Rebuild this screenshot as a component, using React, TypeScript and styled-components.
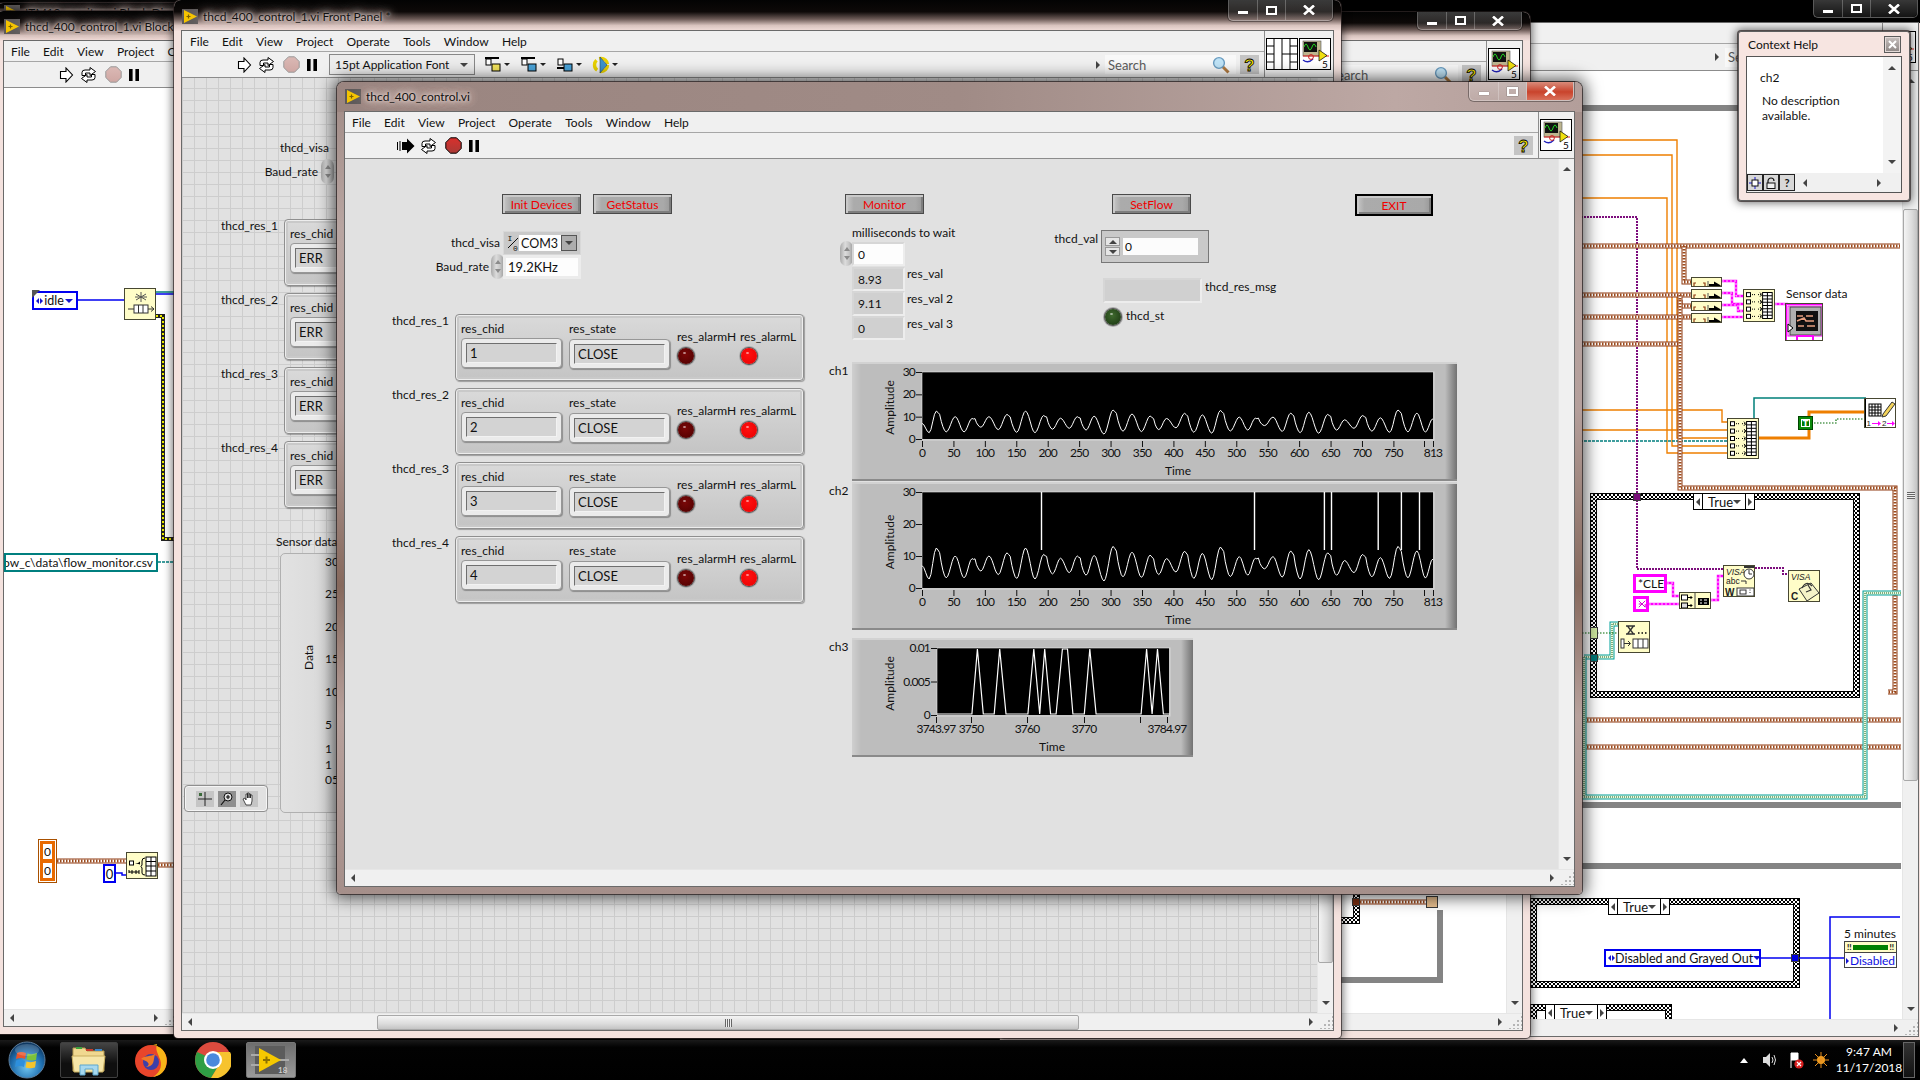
import React from 'react';
import styled, { createGlobalStyle, css } from 'styled-components';

const FONT = `Lato, "Open Sans", "Liberation Sans", sans-serif`;

const GlobalStyle = createGlobalStyle`
  html, body { margin: 0; background: #000; overflow: hidden; }
  body { font-family: ${FONT}; font-size: 12px; color: #111; }
`;

interface Pos { $x: number; $y: number; }
interface Box extends Pos { $w: number; $h: number; }

const place = css<Pos>`
  position: absolute;
  left: ${(p) => p.$x}px;
  top: ${(p) => p.$y}px;
`;
const box = css<Box>`
  ${place};
  width: ${(p) => p.$w}px;
  height: ${(p) => p.$h}px;
  box-sizing: border-box;
`;

const Desktop = styled.div`
  position: relative;
  width: 1920px;
  height: 1080px;
  overflow: hidden;
  background: #000;
`;

/* ---------- window chrome ---------- */

const WindowFrame = styled.div<Box & { $z: number; $focus?: boolean }>`
  ${box};
  z-index: ${(p) => p.$z};
  display: flex;
  flex-direction: column;
  padding: 0 8px 8px;
  border-radius: 7px 7px 4px 4px;
  background: ${(p) =>
    p.$focus
      ? 'linear-gradient(180deg,#9f8a85 0,#b8a5a1 18%,#b5a09c 40%,#86695d 62%,#b7a19c 78%,#a58f8a 100%)'
      : '#f4e2de'};
  box-shadow: ${(p) =>
    p.$focus
      ? '0 0 0 1px rgba(50,40,40,.8), 0 0 16px 4px rgba(0,0,0,.62)'
      : '0 0 0 1px rgba(50,40,40,.7), 0 0 9px 2px rgba(0,0,0,.55)'};
`;

const TITLE_BG = {
  focus: 'linear-gradient(90deg,#9a8580 0,#a08b86 50%,#bda8a4 85%,#b39e9a 100%)',
  glass: 'linear-gradient(180deg,#030303 0,#0d0908 38%,#6e5c58 62%,#d8c3be 82%,#f3dfdb 100%)',
  black: '#000',
};

const TitleBar = styled.div<{ $h: number; $pad: number; $tone?: keyof typeof TITLE_BG }>`
  height: ${(p) => p.$h}px;
  flex: none;
  box-sizing: border-box;
  display: flex;
  align-items: flex-start;
  margin: 0 -8px;
  padding: ${(p) => p.$pad}px 8px 0;
  border-radius: 7px 7px 0 0;
  background: ${(p) => TITLE_BG[p.$tone ?? 'glass']};
`;

const TitleIcon = styled.span`
  width: 16px;
  height: 15px;
  flex: none;
  display: inline-flex;
  margin-right: 5px;
`;

const TitleText = styled.span`
  font-size: 12px;
  line-height: 15px;
  color: #111;
  white-space: nowrap;
  text-shadow: 0 0 3px #ead9d5, 0 0 6px #ead9d5, 0 0 9px #e2cfca, 0 0 13px #d9c5c0, 0 0 17px #d9c5c0;
`;

const CaptionGroup = styled.div<{ $top: number }>`
  display: flex;
  margin-left: auto;
  margin-top: ${(p) => p.$top}px;
  border: 1px solid rgba(255, 255, 255, 0.35);
  border-top: 0;
  border-radius: 0 0 5px 5px;
  box-shadow: 0 0 0 1px rgba(0, 0, 0, 0.35);
`;

const CaptionButton = styled.div<{ $w: number; $h: number; $red?: boolean }>`
  width: ${(p) => p.$w}px;
  height: ${(p) => p.$h}px;
  display: flex;
  align-items: center;
  justify-content: center;
  border-right: 1px solid rgba(255, 255, 255, 0.25);
  background: ${(p) =>
    p.$red
      ? 'linear-gradient(180deg,#d98b7a,#c9432c 55%,#d9705a)'
      : 'linear-gradient(180deg,rgba(255,255,255,.22),rgba(255,255,255,.08))'};
  &:last-child { border-right: 0; border-radius: 0 0 5px 0; }
`;

const MinGlyph = styled.span`
  width: 10px;
  height: 3px;
  margin-top: 5px;
  background: #fff;
  box-shadow: 0 0 1px #333;
`;
const MaxGlyph = styled.span`
  width: 7px;
  height: 5px;
  border: 2px solid #fff;
  box-shadow: 0 0 1px #333;
`;

function Caption({ top, h, red }: { top: number; h: number; red?: boolean }) {
  return (
    <CaptionGroup $top={top}>
      <CaptionButton $w={28} $h={h}><MinGlyph /></CaptionButton>
      <CaptionButton $w={27} $h={h}><MaxGlyph /></CaptionButton>
      <CaptionButton $w={46} $h={h} $red={red}>
        <svg width="12" height="10" viewBox="0 0 12 10">
          <path d="M1 0.5 L11 9.5 M11 0.5 L1 9.5" stroke="#fff" strokeWidth="2.6" />
        </svg>
      </CaptionButton>
    </CaptionGroup>
  );
}

const Client = styled.div`
  flex: 1;
  min-height: 0;
  display: flex;
  flex-direction: column;
  background: #f0f0f0;
  box-shadow: 0 0 0 1px #6a6a6a;
`;

const Header = styled.div`
  flex: none;
  display: flex;
  border-bottom: 1px solid #8c8c8c;
`;
const HeaderMain = styled.div`
  flex: 1;
  min-width: 0;
`;
const MenuBar = styled.div<{ $pad: number }>`
  height: 20px;
  display: flex;
  align-items: center;
  gap: 13.3px;
  padding-left: ${(p) => p.$pad}px;
  border-bottom: 1px solid #a6a6a6;
  white-space: nowrap;
  overflow: hidden;
  font-size: 12px;
`;
const MenuItem = styled.span``;

const Toolbar = styled.div<{ $h: number; $pad: number; $padRight?: number }>`
  height: ${(p) => p.$h}px;
  display: flex;
  align-items: center;
  padding-left: ${(p) => p.$pad}px;
  padding-right: ${(p) => p.$padRight ?? 5}px;
  overflow: hidden;
`;
const ToolSpacer = styled.div`
  flex: 1;
`;
const ToolGroup = styled.div`
  display: flex;
  align-items: center;
  gap: 5px;
  & > :nth-child(3) { margin-left: 3px; }
  & > :nth-child(4) { margin-left: 1px; }
`;
const AlignGroup = styled.div`
  display: flex;
  align-items: center;
  gap: 10px;
`;

const IconPanel = styled.div`
  flex: none;
  display: flex;
  align-items: center;
  justify-content: flex-end;
  gap: 1px;
  padding: 0 2px 0 1px;
  border-left: 1px solid #8c8c8c;
`;

const MENUS = ['File', 'Edit', 'View', 'Project', 'Operate', 'Tools', 'Window', 'Help'];

function Menus({ pad, items = MENUS }: { pad: number; items?: string[] }) {
  return (
    <MenuBar $pad={pad}>
      {items.map((m) => (
        <MenuItem key={m}>{m}</MenuItem>
      ))}
    </MenuBar>
  );
}

const Body = styled.div`
  flex: 1;
  min-height: 0;
  display: flex;
`;
const Canvas = styled.div<{ $grid?: boolean; $panel?: boolean }>`
  flex: 1;
  min-width: 0;
  position: relative;
  overflow: hidden;
  background-color: ${(p) => (p.$grid || p.$panel ? '#e1e1e1' : '#fff')};
  ${(p) =>
    p.$grid &&
    css`
      background-image: linear-gradient(90deg, #cdcdcd 1px, transparent 1px),
        linear-gradient(180deg, #cdcdcd 1px, transparent 1px);
      background-size: 12px 12px;
      background-position: 0 10px;
    `}
`;
const ScreenOrigin = styled.div<Pos>`
  position: absolute;
  left: ${(p) => -p.$x}px;
  top: ${(p) => -p.$y}px;
  width: 1920px;
  height: 1080px;
`;

const VBar = styled.div`
  flex: none;
  width: 16px;
  display: flex;
  flex-direction: column;
  align-items: center;
  justify-content: space-between;
  padding: 8px 0;
  box-sizing: border-box;
  position: relative;
  background: #f0f0f0;
  border-left: 1px solid #e6e6e6;
`;
const HBar = styled.div`
  flex: none;
  height: 17px;
  display: flex;
  align-items: center;
  position: relative;
  background: #f0f0f0;
  border-top: 1px solid #e6e6e6;
  box-sizing: border-box;
`;
const Arrow = styled.span<{ $dir: 'up' | 'down' | 'left' | 'right' }>`
  width: 0;
  height: 0;
  flex: none;
  ${(p) =>
    p.$dir === 'up' || p.$dir === 'down'
      ? css`
          border-left: 4px solid transparent;
          border-right: 4px solid transparent;
          border-${p.$dir === 'up' ? 'bottom' : 'top'}: 4px solid #444;
        `
      : css`
          border-top: 4px solid transparent;
          border-bottom: 4px solid transparent;
          border-${p.$dir === 'left' ? 'right' : 'left'}: 4px solid #444;
        `}
`;
const HArrowSlot = styled.span<{ $w: number }>`
  flex: none;
  width: ${(p) => p.$w}px;
  display: flex;
  justify-content: center;
`;
const HTrack = styled.span`
  flex: 1;
  position: relative;
  align-self: stretch;
`;
const Thumb = styled.div<{ $vertical?: boolean; $start: number; $len: number }>`
  position: absolute;
  box-sizing: border-box;
  border: 1px solid #a8a8a8;
  border-radius: 2px;
  display: flex;
  align-items: center;
  justify-content: center;
  ${(p) =>
    p.$vertical
      ? css`
          top: ${p.$start}px;
          height: ${p.$len}px;
          left: 0;
          right: 0;
          background: linear-gradient(90deg, #f4f4f4, #dcdcdc 60%, #c4c4c4);
        `
      : css`
          left: ${p.$start}px;
          width: ${p.$len}px;
          top: 1px;
          bottom: 0;
          background: linear-gradient(180deg, #f4f4f4, #dcdcdc 60%, #c4c4c4);
        `}
`;
const ThumbGrip = styled.span<{ $vertical?: boolean }>`
  ${(p) =>
    p.$vertical
      ? css`
          width: 8px;
          height: 7px;
          background: repeating-linear-gradient(180deg, #666 0 1px, #eee 1px 2px);
        `
      : css`
          width: 7px;
          height: 8px;
          background: repeating-linear-gradient(90deg, #666 0 1px, #eee 1px 2px);
        `}
`;
const ResizeGrip = styled.span`
  flex: none;
  width: 14px;
  height: 14px;
  background-image: radial-gradient(#b5b5b5 1px, transparent 1.2px);
  background-size: 4px 4px;
  clip-path: polygon(100% 0, 100% 100%, 0 100%);
`;

function HScroll({ leftW, rightW, thumb }: { leftW: number; rightW: number; thumb?: [number, number] }) {
  return (
    <HBar>
      <HArrowSlot $w={leftW}><Arrow $dir="left" /></HArrowSlot>
      <HTrack>
        {thumb && (
          <Thumb $start={thumb[0]} $len={thumb[1]}><ThumbGrip /></Thumb>
        )}
      </HTrack>
      <HArrowSlot $w={rightW}><Arrow $dir="right" /></HArrowSlot>
      <ResizeGrip />
    </HBar>
  );
}

/* ---------- toolbar drawings ---------- */

function LvLogo() {
  return (
    <svg width="16" height="15" viewBox="0 0 16 15">
      <rect width="16" height="15" fill="#5e5a5a" />
      <path d="M2 1 L15 7.5 L2 14 Z" fill="#f5c400" />
      <path d="M4.5 7.5 h4 M6.5 5.5 v4" stroke="#7a6000" strokeWidth="1.2" />
    </svg>
  );
}
function RunArrow({ active }: { active?: boolean }) {
  return (
    <svg width="18" height="16" viewBox="0 0 18 16">
      {active ? (
        <>
          <path d="M0 4 h1 v8 h-1 Z M2.5 3 h1 v10 h-1 Z" fill="#000" />
          <path d="M5 4 H10 V0.5 L17.5 8 L10 15.5 V12 H5 Z" fill="#000" />
        </>
      ) : (
        <path d="M3.5 4.5 H9 V1 L15.5 8 L9 15 V11.5 H3.5 Z" fill="#fff" stroke="#000" strokeWidth="1.1" />
      )}
    </svg>
  );
}
function LoopIcon() {
  return (
    <svg width="17" height="16" viewBox="0 0 17 16" fill="#fff" stroke="#000" strokeWidth="1">
      <path d="M2 8.5 V5.5 Q2 3 5 3 H10 V0.5 L15.5 4.5 L10 8.5 V6 H5.5 V8.5 Z" />
      <path d="M15 7.5 V10.5 Q15 13 12 13 H7 V15.5 L1.5 11.5 L7 7.5 V10 H11.5 V7.5 Z" />
    </svg>
  );
}
function StopIcon({ active }: { active?: boolean }) {
  return (
    <svg width="17" height="17" viewBox="0 0 17 17">
      <defs>
        <linearGradient id={active ? 'stopA' : 'stopB'} x1="0" y1="0" x2="0" y2="1">
          <stop offset="0" stopColor={active ? '#d9302c' : '#dbb9b5'} />
          <stop offset="1" stopColor={active ? '#a93a36' : '#cfa7a3'} />
        </linearGradient>
      </defs>
      <path
        d="M5.5 .8 H11.5 L16.2 5.5 V11.5 L11.5 16.2 H5.5 L.8 11.5 V5.5 Z"
        fill={`url(#${active ? 'stopA' : 'stopB'})`}
        stroke={active ? '#000' : '#999'}
        strokeLinejoin="round"
      />
    </svg>
  );
}
function PauseIcon() {
  return (
    <svg width="12" height="14" viewBox="0 0 12 14">
      <rect x="1" y="1" width="3.6" height="12" fill="#000" />
      <rect x="7.4" y="1" width="3.6" height="12" fill="#000" />
    </svg>
  );
}
function RunControls({ active }: { active?: boolean }) {
  return (
    <ToolGroup>
      <RunArrow active={active} />
      <LoopIcon />
      <StopIcon active={active} />
      <PauseIcon />
    </ToolGroup>
  );
}
function HelpIcon({ w = 19 }: { w?: number }) {
  return (
    <svg width={w} height="19" viewBox="0 0 19 19">
      <rect width="19" height="19" fill="#c4c4c4" />
      <text x="9.5" y="15.5" textAnchor="middle" fontSize="17" fontWeight="900" fontFamily="Liberation Sans" fill="#f7e600" stroke="#000" strokeWidth=".8">?</text>
    </svg>
  );
}
function ViIcon() {
  return (
    <svg width="32" height="32" viewBox="0 0 32 32">
      <rect x=".5" y=".5" width="31" height="31" fill="#fff" stroke="#000" />
      <rect x="4" y="3" width="18" height="15" fill="#bdb58f" stroke="#555" strokeWidth=".6" />
      <rect x="5" y="4" width="13" height="10" fill="#111" />
      <path d="M5 9 Q7 3 9 9 T13 9 T17 9" stroke="#1fd61f" strokeWidth="1" fill="none" />
      <path d="M4 22 Q9 26 14 21" stroke="#2222bb" strokeWidth="1.3" fill="none" />
      <path d="M4 18 H30" stroke="#e02020" strokeWidth="1" />
      <circle cx="12" cy="19" r="2.4" fill="none" stroke="#d02020" />
      <path d="M20 12 L28 17.5 L20 23 Z" fill="#f0e010" stroke="#000" strokeWidth=".7" />
      <text x="26" y="30" fontSize="10" fontFamily="Lato" textAnchor="middle" fill="#000">5</text>
    </svg>
  );
}
function GridIcon() {
  return (
    <svg width="32" height="32" viewBox="0 0 32 32">
      <rect x=".5" y=".5" width="31" height="31" fill="#fff" stroke="#000" />
      <path d="M16 1V31 M8 1V31 M24 1V31 M1 8H8 M1 16H8 M1 24H8 M24 8H31 M24 16H31 M24 24H31 M16 16H24" stroke="#000" strokeWidth="1" />
    </svg>
  );
}
function MagnifierIcon() {
  return (
    <svg width="18" height="18" viewBox="0 0 18 18">
      <path d="M10.5 10.5 L16.5 16.5" stroke="#b07a40" strokeWidth="3" />
      <circle cx="7" cy="7" r="5.4" fill="#bfe3f6" stroke="#6a9cc0" strokeWidth="1.4" />
    </svg>
  );
}
function AlignIcon({ tone }: { tone: number }) {
  const colors = ['#f2e35a', '#4aa3d8', '#4aa3d8', '#e8d000'];
  return (
    <svg width="26" height="18" viewBox="0 0 26 18">
      {tone === 3 ? (
        <>
          <circle cx="9" cy="9" r="6.5" fill="none" stroke="#e8d000" strokeWidth="3.4" strokeDasharray="11 3" />
          <path d="M8 1 L15 9 L8 17 Z" fill="#3d93cc" stroke="#235" strokeWidth=".5" />
        </>
      ) : (
        <>
          <rect x="1" y={tone === 2 ? 11 : 1} width="14" height="2" fill="#000" />
          <rect x="2" y="3" width="5" height="6" fill="#fff" stroke="#000" />
          <rect x="8" y="8" width="8" height="7" fill={colors[tone]} stroke="#000" />
        </>
      )}
      <path d="M20 7 h6 l-3 3 z" fill="#222" />
    </svg>
  );
}
function VisaSymbol() {
  return (
    <svg width="12" height="18" viewBox="0 0 12 18">
      <path d="M1 14 L11 4" stroke="#111" />
      <text x="0.5" y="7" fontSize="8" fontFamily="Liberation Mono" fill="#111">I</text>
      <text x="6" y="17" fontSize="8" fontFamily="Liberation Mono" fill="#111">0</text>
    </svg>
  );
}

const FontBox = styled.div`
  width: 146px;
  height: 21px;
  margin: 0 9px 0 11px;
  padding: 0 6px 0 5px;
  box-sizing: border-box;
  display: flex;
  align-items: center;
  justify-content: space-between;
  border: 1px solid #888;
  background: #ececec;
  font-size: 12px;
`;
const SearchGroup = styled.div<{ $left?: number; $right?: number }>`
  display: flex;
  align-items: center;
  width: 131px;
  height: 19px;
  margin: 0 ${(p) => p.$right ?? 4}px 0 ${(p) => p.$left ?? 0}px;
  padding: 0 6px 0 3px;
  box-sizing: border-box;
  background: #f8f8f8;
  justify-content: space-between;
  color: #5c5c5c;
  font-size: 13px;
`;

/* ---------- front panel controls ---------- */

const Label = styled.span<Pos & { $right?: boolean }>`
  position: absolute;
  top: ${(p) => p.$y - 8}px;
  ${(p) => (p.$right ? `right: ${1920 - p.$x}px;` : `left: ${p.$x}px;`)}
  line-height: 16px;
  font-size: 12px;
  white-space: nowrap;
`;

const LvButton = styled.div<Box & { $exit?: boolean }>`
  ${box};
  display: flex;
  align-items: center;
  justify-content: center;
  color: #f00000;
  font-size: 12px;
  border: 1px solid ${(p) => (p.$exit ? '#000' : '#4a4a4a')};
  background: linear-gradient(90deg, #c8c8c8 0, #ababab 10%, #a9a9a9 90%, #999 100%);
  box-shadow: inset 2px 2px 0 #c9c9c9, inset -2px -2px 0 #7e7e7e, 0 0 0 ${(p) => (p.$exit ? 1 : 0)}px #000;
`;

const FieldTile = styled.div<Box & { $white?: boolean; $fs?: number }>`
  ${box};
  display: flex;
  align-items: center;
  padding-left: 4px;
  font-size: ${(p) => p.$fs ?? 12}px;
  border: 2px solid #ededed;
  border-top-color: #d6d6d6;
  border-left-color: #d6d6d6;
  background: ${(p) => (p.$white ? '#fdfdfd' : '#d0d0d0')};
`;

const SpinnerPill = styled.div<Box>`
  ${box};
  display: flex;
  flex-direction: column;
  align-items: center;
  justify-content: space-around;
  border-radius: 50% / 28%;
  background: linear-gradient(90deg, #a9a9a9, #dcdcdc 40%, #c5c5c5 70%, #9c9c9c);
  padding: 3px 0;
`;
const SpinTick = styled.span<{ $up?: boolean }>`
  width: 0;
  height: 0;
  border-left: 3px solid transparent;
  border-right: 3px solid transparent;
  ${(p) => (p.$up ? 'border-bottom' : 'border-top')}: 4px solid #8b8b8b;
`;
function Spinner(props: Box) {
  return (
    <SpinnerPill {...props}>
      <SpinTick $up />
      <SpinTick />
    </SpinnerPill>
  );
}

const VisaTile = styled.div<Box>`
  ${box};
  display: flex;
  align-items: center;
  padding: 3px;
  background: #c9c9c9;
  border: 1px solid #d8d8d8;
`;
const VisaValue = styled.span`
  flex: 1;
  align-self: stretch;
  display: flex;
  align-items: center;
  padding-left: 2px;
  background: #fdfdfd;
  font-size: 12.5px;
`;
const DropButton = styled.span`
  flex: none;
  width: 16px;
  align-self: stretch;
  display: flex;
  align-items: center;
  justify-content: center;
  background: #adadad;
  border: 1px solid #555;
  box-sizing: border-box;
`;

const RingTile = styled.div<Box>`
  ${box};
  display: flex;
  align-items: center;
  padding-left: 2px;
  font-size: 13px;
  background: #fdfdfd;
  border: 3px solid #ececec;
`;

const ClusterBox = styled.div<Box>`
  ${box};
  display: flex;
  padding: 5px 5px 0;
  border: 1px solid #8f8f8f;
  border-radius: 4px;
  background: linear-gradient(180deg, #dadada 0, #d2d2d2 35%, #c4c4c4 100%);
  box-shadow: inset 0 0 0 1px #ededed, inset 0 0 0 3px #c9c9c9, 1px 1px 1px rgba(0, 0, 0, 0.3);
`;
const ClusterCol = styled.div<{ $w: number; $top: number; $gap: number }>`
  width: ${(p) => p.$w}px;
  flex: none;
  padding-top: ${(p) => p.$top}px;
  display: flex;
  flex-direction: column;
  gap: ${(p) => p.$gap}px;
  white-space: nowrap;
`;
const ClusterLabel = styled.span`
  line-height: 15px;
  font-size: 12px;
`;
const ReadOuter = styled.div`
  width: 101px;
  height: 30px;
  padding: 4px;
  box-sizing: border-box;
  border-radius: 4px;
  border: 1px solid #979797;
  background: #ebebeb;
  box-shadow: 1px 1px 1px rgba(0, 0, 0, 0.3);
`;
const ReadInner = styled.div`
  height: 100%;
  display: flex;
  align-items: center;
  box-sizing: border-box;
  padding-left: 3px;
  border: 1px solid;
  border-color: #6f6f6f #f2f2f2 #f2f2f2 #6f6f6f;
  background: #d3d3d3;
  font-size: 13px;
`;
const Led = styled.span<{ $color: string; $size?: number }>`
  position: relative;
  display: block;
  width: ${(p) => p.$size ?? 16}px;
  height: ${(p) => p.$size ?? 16}px;
  border-radius: 50%;
  margin-left: 1px;
  background: ${(p) => p.$color};
  box-shadow: 0 0 0 1px #555, 0 0 0 2px #aaa;
  &::after {
    content: '';
    position: absolute;
    left: 5px;
    top: 4px;
    width: 3px;
    height: 2px;
    background: rgba(255, 255, 255, 0.55);
    border-radius: 50%;
  }
`;
const FreeLed = styled(Led)<Pos>`
  position: absolute;
  left: ${(p) => p.$x}px;
  top: ${(p) => p.$y}px;
  margin: 0;
`;

function Resource({ y, id, value }: { y: number; id: string; value: string }) {
  return (
    <>
      <Label $x={449} $right $y={y + 7}>{`thcd_res_${id}`}</Label>
      <ClusterBox $x={455} $y={y} $w={349} $h={67}>
        <ClusterCol $w={108} $top={1} $gap={2}>
          <ClusterLabel>res_chid</ClusterLabel>
          <ReadOuter><ReadInner>{id}</ReadInner></ReadOuter>
        </ClusterCol>
        <ClusterCol $w={108} $top={1} $gap={3}>
          <ClusterLabel>res_state</ClusterLabel>
          <ReadOuter><ReadInner>{value}</ReadInner></ReadOuter>
        </ClusterCol>
        <ClusterCol $w={63} $top={9} $gap={4}>
          <ClusterLabel>res_alarmH</ClusterLabel>
          <Led $color="radial-gradient(circle at 45% 40%,#7a0808,#4c0000)" />
        </ClusterCol>
        <ClusterCol $w={60} $top={9} $gap={4}>
          <ClusterLabel>res_alarmL</ClusterLabel>
          <Led $color="radial-gradient(circle at 45% 40%,#ff1010,#e80000)" />
        </ClusterCol>
      </ClusterBox>
    </>
  );
}

function BackResource({ y, id }: { y: number; id: string }) {
  return (
    <>
      <Label $x={278} $right $y={y + 7}>{`thcd_res_${id}`}</Label>
      <ClusterBox $x={284} $y={y} $w={120} $h={67}>
        <ClusterCol $w={108} $top={1} $gap={2}>
          <ClusterLabel>res_chid</ClusterLabel>
          <ReadOuter><ReadInner>ERR</ReadInner></ReadOuter>
        </ClusterCol>
      </ClusterBox>
    </>
  );
}

/* ---------- charts ---------- */

const ChartPanel = styled.div<Box>`
  ${box};
  background: linear-gradient(90deg, #cfcfcf 0, #bdbdbd 9px, #bdbdbd calc(100% - 12px), #727272 100%);
  box-shadow: inset 0 2px 0 #d2d2d2, inset 0 -2px 0 #8a8a8a;
`;
const ChartSvg = styled.svg`
  display: block;
  font-family: ${FONT};
  font-size: 12px;
  fill: #111;
`;
const TickText = styled.text`
  letter-spacing: -0.8px;
`;

interface ChartProps extends Box {
  plot: { x: number; y: number; w: number; h: number };
  yTicks: [string, number][];
  xTicks: [string, number][];
  extraTicks?: number[];
  timeX: number;
  children: React.ReactNode;
}

function Chart({ $x, $y, $w, $h, plot, yTicks, xTicks, extraTicks = [], timeX, children }: ChartProps) {
  const bottom = plot.y + plot.h;
  return (
    <ChartPanel $x={$x} $y={$y} $w={$w} $h={$h}>
      <ChartSvg width={$w} height={$h}>
        <rect x={plot.x} y={plot.y} width={plot.w} height={plot.h} fill="#000" />
        <rect x={plot.x} y={plot.y} width={plot.w + 1} height={plot.h + 1} fill="none" stroke="#e8e8e8" strokeOpacity=".6" />
        {yTicks.map(([label, frac]) => {
          const ty = bottom - frac * plot.h;
          return (
            <g key={label}>
              <path d={`M${plot.x - 6} ${ty + 0.5} H${plot.x}`} stroke="#111" />
              <TickText x={plot.x - 7} y={ty + 4} textAnchor="end">{label}</TickText>
            </g>
          );
        })}
        {xTicks.map(([label, px]) => (
          <g key={label}>
            <path d={`M${plot.x + px + 0.5} ${bottom + 2} v6`} stroke="#111" />
            <TickText x={plot.x + px} y={bottom + 18} textAnchor="middle">{label}</TickText>
          </g>
        ))}
        {extraTicks.map((px) => (
          <path key={px} d={`M${plot.x + px + 0.5} ${bottom + 2} v6`} stroke="#111" />
        ))}
        <text x={timeX} y={bottom + 36} textAnchor="middle">Time</text>
        <text
          transform={`translate(42 ${plot.y + plot.h / 2 + 2}) rotate(-90)`}
          textAnchor="middle"
        >
          Amplitude
        </text>
        <g transform={`translate(${plot.x} ${plot.y})`}>{children}</g>
      </ChartSvg>
    </ChartPanel>
  );
}

// peaks read off the trace: position in the 512px plot, amplitude
const PEAK_X = [275, 320, 360, 400, 443, 487, 530, 570, 610, 650, 695, 740, 783, 822, 865, 907, 950, 995, 1033, 1075, 1117, 1160, 1205, 1245, 1288, 1330, 1372, 1417, 1455];
const PEAK_V = [12.5, 10, 9.2, 10, 11, 12.5, 10.5, 9.3, 10, 10.2, 13, 11.2, 10.3, 9.2, 11.5, 10.8, 12.8, 9.8, 9.3, 9.8, 11.6, 12, 11, 8.6, 10.5, 9.5, 13, 11.6, 9.2];
const LOW_V = [2.8, 3.2, 3.2, 5.3, 4.2, 3, 2.8, 4.4, 4.8, 4, 2.2, 3.5, 3.3, 4.2, 5, 3, 2.6, 3.6, 4, 6, 3.4, 2.8, 2.6, 4, 4.8, 3.5, 3, 3.2, 3.1];

function tracePoints(w: number, h: number) {
  const px = (zx: number) => (zx - 241) / 2.376;
  const knots: [number, number][] = [[0, 7]];
  PEAK_X.forEach((zx, i) => {
    const prev = i === 0 ? 241 : PEAK_X[i - 1];
    knots.push([px((zx + prev) / 2 + (i === 0 ? 0 : 1)), LOW_V[i]]);
    knots.push([px(zx), PEAK_V[i]]);
  });
  const pts: string[] = [];
  for (let k = 0; k < knots.length - 1; k++) {
    const [x0, v0] = knots[k];
    const [x1, v1] = knots[k + 1];
    const n = Math.max(2, Math.round((x1 - x0) / 1.6));
    for (let j = 0; j < n; j++) {
      const t = j / n;
      const s = (1 - Math.cos(Math.PI * t)) / 2;
      const wobble = k % 4 === 2 && j === 2 ? 0.9 : 0;
      const v = v0 + (v1 - v0) * s + wobble;
      pts.push(`${(x0 + (x1 - x0) * t).toFixed(1)},${(h - (v / 30) * h).toFixed(1)}`);
    }
  }
  pts.push(`${w},${(h - (9 / 30) * h).toFixed(1)}`);
  return pts.join(' ');
}

const X_LABELS = [0, 50, 100, 150, 200, 250, 300, 350, 400, 450, 500, 550, 600, 650, 700, 750, 813];
const X_TICKS: [string, number][] = X_LABELS.map((v) => [String(v), (v / 813) * 511]);
const Y_TICKS: [string, number][] = [['30', 1], ['20', 2 / 3], ['10', 1 / 3], ['0', 0]];
const SPIKES = [525, 1031, 1197, 1214, 1325, 1380, 1423];

const CH3_POINTS: [number, number][] = [[277, 0], [360, 0], [373, 1], [387, 0], [413, 0], [426, 1], [441, 0], [493, 0], [507, 1], [521, 0], [533, 1], [547, 0], [560, 0], [575, 1], [587, 1], [600, 0], [627, 0], [640, 1], [655, 0], [762, 0], [775, 1], [788, 0], [801, 1], [815, 0], [830, 0]];

/* ---------- block diagram ---------- */

const WireLayer = styled.svg`
  position: absolute;
  left: 0;
  top: 0;
  pointer-events: none;
`;

type WireKind = 'orange' | 'orangeThick' | 'brown' | 'purple' | 'teal' | 'tealDouble' | 'gray' | 'blue' | 'pink' | 'green' | 'yellow' | 'tealSolid';

function Wire({ d, kind }: { d: string; kind: WireKind }) {
  const base = { fill: 'none', d } as const;
  switch (kind) {
    case 'orange':
      return <path {...base} stroke="#ee7f00" strokeWidth="1.4" />;
    case 'orangeThick':
      return <path {...base} stroke="#ee7f00" strokeWidth="3" />;
    case 'brown':
      return (
        <g>
          <path {...base} stroke="#8f3b12" strokeWidth="5" />
          <path {...base} stroke="#fff" strokeWidth="3" />
          <path {...base} stroke="#9c4a1c" strokeWidth="3" strokeDasharray="1.5 1.5" />
        </g>
      );
    case 'purple':
      return (
        <g>
          <path {...base} stroke="#7d0d7d" strokeWidth="2" strokeDasharray="2 1" />
        </g>
      );
    case 'teal':
      return <path {...base} stroke="#007f7f" strokeWidth="1.6" strokeDasharray="3 1" />;
    case 'tealSolid':
      return <path {...base} stroke="#00807a" strokeWidth="1.5" />;
    case 'tealDouble':
      return (
        <g>
          <path {...base} stroke="#00a19b" strokeWidth="5" />
          <path {...base} stroke="#eef6e2" strokeWidth="3" />
          <path {...base} stroke="#0a6a1a" strokeWidth="1" strokeDasharray="1 1" />
        </g>
      );
    case 'gray':
      return <path {...base} stroke="#848484" strokeWidth="6" />;
    case 'blue':
      return <path {...base} stroke="#0000f0" strokeWidth="1.5" />;
    case 'pink':
      return (
        <g>
          <path {...base} stroke="#ff00ff" strokeWidth="2.4" />
          <path {...base} stroke="#fff" strokeWidth="0.8" strokeDasharray="2 2" />
        </g>
      );
    case 'green':
      return <path {...base} stroke="#006a00" strokeWidth="1.2" strokeDasharray="1.5 1.5" />;
    case 'yellow':
      return (
        <g>
          <path {...base} stroke="#222" strokeWidth="4" />
          <path {...base} stroke="#e8e800" strokeWidth="2" strokeDasharray="2 2" />
        </g>
      );
  }
}

const CaseFrame = styled.div<Box>`
  ${box};
  border: 1px solid #000;
  background: repeating-conic-gradient(#000 0 25%, #fff 0 50%) 0 0 / 4px 4px;
  &::after {
    content: '';
    position: absolute;
    inset: 5px;
    background: #fff;
    border: 1px solid #000;
  }
`;
const CaseSelector = styled.div<Box>`
  ${box};
  z-index: 1;
  display: flex;
  align-items: stretch;
  background: #fff;
  border: 1px solid #000;
  font-size: 13px;
`;
const SelArrow = styled.span`
  flex: none;
  width: 8px;
  display: flex;
  align-items: center;
  justify-content: center;
  border-right: 1px solid #000;
  &:last-child { border-right: 0; border-left: 1px solid #000; }
`;
const SelValue = styled.span`
  flex: 1;
  display: flex;
  align-items: center;
  justify-content: space-between;
  padding: 0 4px 0 5px;
`;
function Selector({ x, y }: { x: number; y: number }) {
  return (
    <CaseSelector $x={x} $y={y} $w={62} $h={17}>
      <SelArrow><Arrow $dir="left" /></SelArrow>
      <SelValue>True<Arrow $dir="down" /></SelValue>
      <SelArrow><Arrow $dir="right" /></SelArrow>
    </CaseSelector>
  );
}

const NodeBox = styled.div<Box>`
  ${box};
  z-index: 2;
  display: block;
  background: #fffdc8;
  border: 1px solid #474732;
  overflow: hidden;
`;
const EnumConst = styled.div<Box & { $fs?: number; $flag?: boolean }>`
  ${box};
  z-index: 2;
  display: flex;
  align-items: center;
  justify-content: space-between;
  padding: 0 3px 0 2px;
  background: #fff;
  border: 2px solid #0000f0;
  font-size: ${(p) => p.$fs ?? 12.5}px;
  white-space: nowrap;
  ${(p) =>
    p.$flag &&
    css`
      &::before {
        content: '';
        position: absolute;
        left: -2px;
        top: -3px;
        border-top: 8px solid #555;
        border-right: 8px solid transparent;
      }
    `}
`;
const EnumArrows = styled.span`
  flex: none;
  display: flex;
  gap: 1px;
`;
const TinyArrow = styled.span<{ $left?: boolean }>`
  width: 0;
  height: 0;
  border-top: 3px solid transparent;
  border-bottom: 3px solid transparent;
  ${(p) => (p.$left ? 'border-right' : 'border-left')}: 3px solid #1414d0;
`;
const EnumDrop = styled.span`
  flex: none;
  width: 0;
  height: 0;
  border-left: 4px solid transparent;
  border-right: 4px solid transparent;
  border-top: 4px solid #1414d0;
`;
const PathConst = styled.div<Box>`
  ${box};
  z-index: 2;
  display: flex;
  align-items: center;
  justify-content: flex-end;
  padding-right: 3px;
  overflow: hidden;
  background: #fff;
  border: 2px solid #007f7f;
  font-size: 12px;
  white-space: nowrap;
`;
const ArrayConst = styled.div<Box>`
  ${box};
  z-index: 2;
  display: flex;
  flex-direction: column;
  align-items: center;
  justify-content: space-around;
  padding: 2px;
  background: #e86a00;
  border: 1px solid #a85000;
  box-shadow: inset 0 0 0 1px #fff;
`;
const ArrayCell = styled.span`
  width: 9px;
  height: 15px;
  display: flex;
  align-items: center;
  justify-content: center;
  background: #fff;
  font-size: 12px;
`;
const NumConst = styled.div<Box>`
  ${box};
  z-index: 2;
  display: flex;
  align-items: center;
  justify-content: center;
  background: #fff;
  border: 2px solid #0000f0;
  font-size: 13px;
`;
const PinkConst = styled.div<Box>`
  ${box};
  z-index: 2;
  display: flex;
  align-items: center;
  padding-left: 2px;
  background: #fff;
  border: 3px solid #ff00ff;
  font-size: 12px;
`;
const DiagramLabel = styled.span<Pos>`
  ${place};
  z-index: 2;
  font-size: 12px;
  line-height: 15px;
  white-space: nowrap;
`;
const GreenBool = styled.div<Box>`
  ${box};
  z-index: 2;
  display: flex;
  align-items: center;
  justify-content: center;
  background: #007a00;
  border: 1px solid #004400;
  color: #fff;
  font-weight: 900;
  font-size: 10px;
  box-shadow: inset 0 0 0 2px #0a8a0a, inset 0 0 0 3px #fff;
`;
const Tunnel = styled.div<Box & { $c: string }>`
  ${box};
  z-index: 2;
  background: ${(p) => p.$c};
  border: 1px solid #3a3a3a;
`;
const StatusBox = styled.div<Box>`
  ${box};
  z-index: 2;
  display: flex;
  flex-direction: column;
  border: 1px solid #444;
  background: #fff;
  font-size: 12px;
  color: #1010e0;
  overflow: hidden;
`;
const StatusTop = styled.div`
  height: 10px;
  flex: none;
  display: flex;
  align-items: center;
  gap: 1px;
  padding: 0 2px;
  background: #fffdc8;
  border-bottom: 1px solid #444;
  font-size: 8px;
  font-weight: 900;
  color: #222;
  line-height: 8px;
`;
const StatusBar = styled.span`
  flex: 1;
  height: 5px;
  background: #008000;
`;
const StatusValue = styled.div`
  flex: 1;
  display: flex;
  align-items: center;
  gap: 1px;
  padding-left: 1px;
  letter-spacing: -0.1px;
`;

const nodeText = { fontFamily: 'Liberation Sans', fill: '#222' };

function BuildArrayGlyph({ w, h, rows }: { w: number; h: number; rows: number }) {
  const step = (h - 2) / rows;
  const cells = [];
  for (let i = 0; i < rows; i++) {
    const cy = 1 + step * i + step / 2;
    cells.push(
      <g key={i}>
        <rect x="2.5" y={cy - 2} width="4" height="4" fill="#fff" stroke="#000" />
        <path d={`M8 ${cy} h4 m2 0 h3`} stroke="#000" strokeDasharray="1 1" />
        <path d={`M${w / 2 + 1} ${cy - 2} l2 2 l-2 2`} fill="none" stroke="#000" />
      </g>
    );
  }
  const gx = w * 0.62;
  const gw = w * 0.32;
  return (
    <svg width={w} height={h} viewBox={`0 0 ${w} ${h}`}>
      {cells}
      <rect x={gx} y="2.5" width={gw} height={h - 5} fill="#fff" stroke="#000" />
      <path d={`M${gx + gw / 2} 3 V${h - 3}`} stroke="#000" />
      {Array.from({ length: rows * 2 - 1 }, (_, i) => (
        <path key={i} d={`M${gx} ${2.5 + ((h - 5) * (i + 1)) / (rows * 2)} h${gw}`} stroke="#000" />
      ))}
    </svg>
  );
}
function IndexGlyph() {
  return (
    <svg width="31" height="9" viewBox="0 0 31 9">
      <path d="M4 2 H2 V7 H4 M11 2 H13 V7 H11" stroke="#8f3b12" fill="none" strokeWidth="1.2" />
      <path d="M16 0 V9" stroke="#555" />
      <path d="M17 3 H22 V0.5 L29 4.5 L22 8.5 V6 H17 Z" fill="#000" />
    </svg>
  );
}
function SensorIcon() {
  return (
    <svg width="38" height="38" viewBox="0 0 38 38">
      <rect x=".5" y=".5" width="37" height="37" fill="#fff" stroke="#ff00ff" />
      <rect x="2" y="2" width="34" height="30" fill="#fff" stroke="#ff00ff" />
      <rect x="4" y="3" width="31" height="28" fill="#b0b0b0" stroke="#444" />
      <rect x="10" y="7" width="22" height="20" fill="#111" />
      <path d="M11 12 h6 m3 0 h7 M11 17 l7 -3 l2 3 h8 M12 22 h6 m3 0 h8" stroke="#e8a080" strokeWidth="1.6" />
      <path d="M2 20 L7 24 L2 28 Z" fill="#fff" stroke="#000" />
      <path d="M11 36 V32 H27 V36" fill="none" stroke="#ff00ff" strokeWidth="2" />
    </svg>
  );
}
function QueueGlyph() {
  return (
    <svg width="32" height="32" viewBox="0 0 32 32">
      <path d="M16 3 V13 M11 5 L21 11 M21 5 L11 11 M10 8 H22" stroke="#555" />
      <rect x="9" y="16" width="14" height="8" fill="#fff" stroke="#333" />
      <path d="M13.5 16 V24 M18 16 V24 M3 20 H9 M23 20 H29 M26 17.5 L29 20 L26 22.5" stroke="#333" fill="none" />
    </svg>
  );
}
function ReshapeGlyph() {
  return (
    <svg width="32" height="27" viewBox="0 0 32 27">
      <rect x="2.5" y="8" width="4" height="4" fill="#fff" stroke="#000" />
      <path d="M8 10 h3 l2 -1.5 v3 z" fill="#000" />
      <path d="M2 20 V17 M2 19 H12 M5 17 V21 M9 17 V21 M12 17 V21" stroke="#000" />
      <path d="M18 5 Q15 5 15 8 V12 L14 13.5 L15 15 V20 Q15 22 18 22" fill="none" stroke="#000" />
      <rect x="19" y="4" width="10" height="19" fill="#fff" stroke="#000" />
      <path d="M24 4 V23 M19 8.5 H29 M19 13 H29 M19 18 H29" stroke="#000" />
    </svg>
  );
}
function WriteIcon() {
  return (
    <svg width="32" height="30" viewBox="0 0 32 30">
      <rect x=".5" y="-1" width="31" height="30.5" fill="#fff" stroke="#000" />
      <g stroke="#000">
        <rect x="4" y="5" width="12" height="12" fill="#fff" />
        <path d="M7 5 V17 M10 5 V17 M13 5 V17 M4 8 H16 M4 11 H16 M4 14 H16" />
      </g>
      <path d="M18 15 L27 3 L30 5 L21 17 L17 18 Z" fill="#f3d35a" stroke="#333" />
      <text x="1.5" y="27" fontSize="8" {...nodeText}>1</text>
      <path d="M7 24 h6 v-2 l3 2.5 l-3 2.5 v-2 h-6 z" fill="#f0f" />
      <text x="17" y="27" fontSize="8" {...nodeText}>2</text>
      <path d="M22 24 h5 v-2 l3 2.5 l-3 2.5 v-2 h-5 z" fill="#f0f" />
    </svg>
  );
}
function VisaWriteGlyph() {
  return (
    <svg width="32" height="32" viewBox="0 0 32 32">
      <text x="2" y="9" fontSize="8.5" fontStyle="italic" {...nodeText}>VISA</text>
      <circle cx="25" cy="8" r="5" fill="#fff" stroke="#333" />
      <path d="M25 4 v4 h3" stroke="#333" fill="none" />
      <rect x="20" y="0" width="10" height="2" fill="#333" />
      <text x="2" y="18" fontSize="8.5" {...nodeText}>abc</text>
      <path d="M17 15 h5 v3" stroke="#333" fill="none" />
      <text x="1" y="30" fontSize="10" fontWeight="900" {...nodeText}>W</text>
      <rect x="13" y="22" width="17" height="8" fill="#fff" stroke="#333" />
      <rect x="16" y="24" width="6" height="4" fill="none" stroke="#333" />
      <path d="M26 23.5 v1 m0 1.5 v1" stroke="#333" />
    </svg>
  );
}
function VisaCloseGlyph() {
  return (
    <svg width="32" height="32" viewBox="0 0 32 32">
      <text x="2" y="9" fontSize="8.5" fontStyle="italic" {...nodeText}>VISA</text>
      <path d="M10 18 L22 12 L30 22 L18 30 Z" fill="#f5f3c8" stroke="#333" />
      <path d="M13 17 Q17 9 23 15 M19 14 l3 5 l-5 2" fill="none" stroke="#333" strokeWidth="1.2" />
      <text x="2" y="29" fontSize="10" fontWeight="900" {...nodeText}>C</text>
    </svg>
  );
}
function ConcatGlyph() {
  return (
    <svg width="32" height="17" viewBox="0 0 32 17">
      <rect x="1.5" y="2" width="6" height="5" fill="#fff" stroke="#000" />
      <rect x="1.5" y="10" width="6" height="5" fill="#ddd" stroke="#000" />
      <path d="M8 4.5 h4 m-1.5 -1.5 l1.5 1.5 l-1.5 1.5 M8 12.5 h4 m-1.5 -1.5 l1.5 1.5 l-1.5 1.5" stroke="#000" fill="none" />
      <path d="M15 0 V17" stroke="#444" />
      <rect x="18" y="5" width="11" height="7" fill="#000" />
      <path d="M20 7 h2 M20 10 h2 M24 7 h3 M24 10 h3" stroke="#fff" />
    </svg>
  );
}
function TimerGlyph() {
  return (
    <svg width="32" height="32" viewBox="0 0 32 32">
      <path d="M7 4 h9 M7 12 h9 M8.5 4 L14.5 12 M14.5 4 L8.5 12" stroke="#333" strokeWidth="1.3" />
      <path d="M19 11 h1.5 m2 0 h1.5 m2 0 h1.5" stroke="#000" strokeWidth="1.5" />
      <rect x="2" y="17" width="3" height="9" fill="#fff" stroke="#333" />
      <path d="M5 21.5 h6 m-2 -2.5 l2.5 2.5 l-2.5 2.5" stroke="#333" fill="none" />
      <rect x="14" y="17" width="15" height="9" fill="#fff" stroke="#333" />
      <path d="M19 17 V26 M24 17 V26" stroke="#333" />
    </svg>
  );
}
function PinkIcon() {
  return (
    <svg width="10" height="10" viewBox="0 0 10 10">
      <path d="M1 1 L5 5 H1 M9 1 L1 9 M5 5 L9 9 V5" stroke="#d000d0" strokeWidth="1.2" fill="none" />
    </svg>
  );
}

/* ---------- context help ---------- */

const HelpFrame = styled(WindowFrame)`
  padding: 0 8px 8px;
  background: #f7e5e1;
  border: 1px solid #5e5e5e;
  border-radius: 3px;
`;
const HelpTitle = styled.div`
  height: 25px;
  flex: none;
  display: flex;
  align-items: center;
  justify-content: space-between;
  padding: 0 0 0 1px;
  font-size: 12px;
`;
const HelpClose = styled.div`
  width: 17px;
  height: 17px;
  box-sizing: border-box;
  display: flex;
  align-items: center;
  justify-content: center;
  background: linear-gradient(180deg, #c7c0be, #8e8785);
  border: 1px solid #5c5c5c;
  box-shadow: inset 0 0 0 1px #e3dad8;
`;
const HelpClient = styled.div`
  flex: 1;
  min-height: 0;
  display: flex;
  flex-direction: column;
  background: #fff;
  box-shadow: 0 0 0 1px #555;
`;
const HelpBody = styled.div`
  flex: 1;
  display: flex;
  min-height: 0;
`;
const HelpText = styled.div`
  flex: 1;
  padding: 13px 0 0 13px;
  font-size: 12px;
  line-height: 15px;
`;
const HelpPara = styled.p`
  margin: 8px 0 0 2px;
`;
const HelpScroll = styled.div`
  width: 18px;
  flex: none;
  display: flex;
  flex-direction: column;
  align-items: center;
  justify-content: space-between;
  padding: 9px 0 9px;
  background: #f3f3f3;
`;
const HelpFooter = styled.div`
  height: 19px;
  flex: none;
  display: flex;
  align-items: center;
  background: #f0f0f0;
`;
const HelpTool = styled.span`
  width: 16px;
  height: 17px;
  box-sizing: border-box;
  display: flex;
  align-items: center;
  justify-content: center;
  border: 1px solid #222;
  background: #d8d8d8;
  font-size: 11px;
  font-weight: 700;
`;
const HelpHScroll = styled.span`
  flex: 1;
  display: flex;
  align-items: center;
  justify-content: space-between;
  padding: 0 20px 0 8px;
`;

/* ---------- palette on the front panel ---------- */

const GraphPalette = styled.div<Box>`
  ${box};
  z-index: 2;
  display: flex;
  align-items: center;
  gap: 4px;
  padding-left: 11px;
  border: 1px solid #8f8f8f;
  border-radius: 4px;
  background: #e1e1e1;
  box-shadow: inset 0 0 0 1px #f5f5f5;
`;
const PaletteBtn = styled.span<{ $on?: boolean }>`
  width: 18px;
  height: 16px;
  display: flex;
  align-items: center;
  justify-content: center;
  background: ${(p) => (p.$on ? '#8f8f8f' : '#c5c5c5')};
`;
const SensorPanel = styled.div<Box>`
  ${box};
  border: 1px solid #b0b0b0;
  border-radius: 5px;
  background: linear-gradient(90deg, #e2e2e2, #d0d0d0);
`;
const AxisNum = styled.span<Pos>`
  ${place};
  line-height: 14px;
  font-size: 12px;
`;
const RotatedLabel = styled.span<Pos>`
  ${place};
  font-size: 12px;
  transform: rotate(-90deg);
`;

/* ---------- taskbar ---------- */

const Taskbar = styled.div`
  position: absolute;
  left: 0;
  right: 0;
  bottom: 0;
  height: 40px;
  z-index: 20;
  display: flex;
  align-items: center;
  background: linear-gradient(180deg, #1a1a1a 0, #020202 18%, #000 100%);
`;
const StartOrb = styled.div`
  width: 38px;
  height: 38px;
  margin: 0 14px 0 8px;
  flex: none;
`;
const TaskButton = styled.div<{ $w: number; $active?: boolean }>`
  width: ${(p) => p.$w}px;
  height: 36px;
  flex: none;
  display: flex;
  align-items: center;
  justify-content: center;
  margin-right: 4px;
  box-sizing: border-box;
  ${(p) =>
    p.$active
      ? css`
          border: 1px solid #777;
          border-radius: 2px;
          background: linear-gradient(180deg, #6e6e6e, #9a9a9a);
        `
      : ''}
  ${(p) =>
    p.$active === false
      ? css`
          border: 1px solid #3f3f3f;
          border-radius: 2px;
          background: linear-gradient(180deg, #454545, #0f0f0f 60%);
        `
      : ''}
`;
const Tray = styled.div`
  margin-left: auto;
  display: flex;
  align-items: center;
  color: #fff;
`;
const TrayIcon = styled.span<{ $mr: number }>`
  display: inline-flex;
  margin-right: ${(p) => p.$mr}px;
`;
const Clock = styled.div`
  width: 70px;
  text-align: center;
  font-size: 12px;
  line-height: 16px;
  color: #fff;
  margin-right: 16px;
  white-space: nowrap;
`;
const ShowDesktop = styled.div`
  position: absolute;
  right: 5px;
  top: 2px;
  bottom: 2px;
  width: 10px;
  border: 1px solid #666;
  background: linear-gradient(180deg, #333, #111);
`;

function ChromeIcon() {
  return (
    <svg width="36" height="36" viewBox="-18 -18 36 36">
      <circle r="18" fill="#dd4b3e" />
      <path d="M0 -8 L-7 -4 L-16 -8 A18 18 0 0 0 -2 18 L6.6 4 Z" fill="#2f9e44" />
      <path d="M0 -8 H17 A18 18 0 0 1 -2 18 L6.6 4 Z" fill="#f7c32e" />
      <circle r="9" fill="#fff" />
      <circle r="6.8" fill="#4a89dc" />
    </svg>
  );
}
function FirefoxIcon() {
  return (
    <svg width="36" height="36" viewBox="0 0 36 36">
      <circle cx="18" cy="19" r="16" fill="#e8452b" />
      <path d="M18 3 C30 3 36 14 33 24 C31 31 26 34 20 35 C28 30 30 22 26 15 C25 11 22 8 24 2 C21 3 19 3 18 3 Z" fill="#f7b418" />
      <circle cx="18" cy="20" r="8" fill="#3d3fa8" />
      <path d="M8 17 C12 13 18 15 22 12 C20 19 22 24 13 25 C19 22 14 19 8 17 Z" fill="#ef7a27" />
    </svg>
  );
}
function FolderIcon() {
  return (
    <svg width="36" height="32" viewBox="0 0 36 32">
      <path d="M2 4 H14 L16 7 H33 V27 H2 Z" fill="#f0d890" stroke="#b49a50" />
      <rect x="5" y="3" width="6" height="2" fill="#3ea33e" />
      <rect x="15" y="5" width="7" height="2" fill="#c83c2c" />
      <rect x="24" y="5" width="7" height="2" fill="#3c86c8" />
      <path d="M1 12 H34 L32 28 H3 Z" fill="#f6e6a8" stroke="#c8ae60" />
      <path d="M9 21 H27 V31 H22 V25 H14 V31 H9 Z" fill="#a6d8ee" stroke="#5ca6cc" />
    </svg>
  );
}
function StartIcon() {
  return (
    <svg width="38" height="38" viewBox="0 0 38 38">
      <defs>
        <radialGradient id="orb" cx=".5" cy=".7" r=".7">
          <stop offset="0" stopColor="#6fc4ee" />
          <stop offset=".6" stopColor="#1f6fb0" />
          <stop offset="1" stopColor="#0b2f55" />
        </radialGradient>
      </defs>
      <circle cx="19" cy="19" r="18" fill="url(#orb)" stroke="#5d7d9b" />
      <path d="M9 12 Q13 10 18 12 L17 18 Q13 16 8 18 Z" fill="#e8542a" />
      <path d="M19.5 12.5 Q24 14 29 12 L28 19 Q23 20 18.5 18.5 Z" fill="#7cc23a" />
      <path d="M8 19.5 Q13 18 17 20 L16 26 Q12 24 7 26 Z" fill="#2d8fdc" />
      <path d="M18.5 20.5 Q23 22 28 20 L27 26.5 Q22 28 17.5 26.5 Z" fill="#f4c42c" />
      <ellipse cx="19" cy="9" rx="12" ry="6" fill="#fff" opacity=".18" />
    </svg>
  );
}
function LabviewTaskIcon() {
  return (
    <svg width="40" height="32" viewBox="0 0 40 32">
      <rect x="4" y="2" width="30" height="28" fill="#5c5c5c" />
      <path d="M0 11 H8 M0 21 H8 M28 16 H38" stroke="#aaa" strokeWidth="2" />
      <path d="M8 4 L30 16 L8 28 Z" fill="#f5c800" />
      <path d="M12 16 h7 M15.5 12.5 v7" stroke="#8a7000" strokeWidth="2" />
      <text x="27" y="29" fontSize="8" fontFamily="Lato" fontWeight="700" fill="#ccc">18</text>
    </svg>
  );
}

/* ---------- windows ---------- */

function BigDiagramWindow() {
  return (
    <WindowFrame $x={1000} $y={0} $w={926} $h={1044} $z={1}>
      <TitleBar $h={23} $pad={0} $tone="black">
        <Caption top={0} h={17} />
      </TitleBar>
      <Client>
        <Header>
          <HeaderMain>
            <Menus pad={10} items={['File']} />
            <Toolbar $h={26} $pad={0} $padRight={0}>
              <ToolSpacer />
              <Arrow $dir="right" />
              <SearchGroup $left={6} $right={26}>Search</SearchGroup>
            </Toolbar>
          </HeaderMain>
          <IconPanel><ViIcon /></IconPanel>
        </Header>
        <Body>
          <Canvas>
            <ScreenOrigin $x={1008} $y={71}>
              <CaseFrame $x={1590} $y={493} $w={270} $h={205} />
              <Selector x={1693} y={493} />
              <CaseFrame $x={1530} $y={898} $w={270} $h={90} />
              <Selector x={1608} y={898} />
              <CaseFrame $x={1530} $y={1004} $w={142} $h={90} />
              <Selector x={1545} y={1004} />

              <WireLayer width="1920" height="1080">
                <Wire kind="gray" d="M1500 108 H1901" />
                <Wire kind="gray" d="M1500 805 H1901" />
                <Wire kind="gray" d="M1500 866 H1901" />
                <Wire kind="orange" d="M1500 140 H1677 V438 H1728" />
                <Wire kind="orange" d="M1500 155 H1672 V446 H1728" />
                <Wire kind="orange" d="M1500 198 H1667 V453 H1728" />
                <Wire kind="orange" d="M1500 410 H1722 V422 H1728" />
                <Wire kind="orange" d="M1500 430 H1728" />
                <Wire kind="teal" d="M1500 441 H1728" />
                <Wire kind="tealSolid" d="M1754 418 V398 H1866" />
                <Wire kind="purple" d="M1500 217 H1637 V569 H1723" />
                <Wire kind="purple" d="M1755 568 H1783 V574 H1788" />
                <Wire kind="brown" d="M1500 246 H1900" />
                <Wire kind="brown" d="M1684 246 V282 H1692" />
                <Wire kind="brown" d="M1500 295 H1692" />
                <Wire kind="brown" d="M1500 317 H1692" />
                <Wire kind="brown" d="M1500 344 H1680" />
                <Wire kind="brown" d="M1680 295 V306 H1692" />
                <Wire kind="brown" d="M1680 300 V488 H1895 V692 H1888" />
                <Wire kind="brown" d="M1500 720 H1901" />
                <Wire kind="brown" d="M1500 747 H1901" />
                <Wire kind="tealDouble" d="M1584 657 H1612 V624 H1618" />
                <Wire kind="tealDouble" d="M1584 657 V797 H1865 V593 H1901" />
                <Wire kind="green" d="M1582 633 H1618" />
                <Wire kind="orangeThick" d="M1759 438 H1809 V412 H1865" />
                <Wire kind="green" d="M1814 423 H1836 V419 H1865" />
                <Wire kind="pink" d="M1722 281 H1736 V296 H1743" />
                <Wire kind="pink" d="M1722 293 H1732 V304 H1743" />
                <Wire kind="pink" d="M1722 305 H1738 V311 H1743" />
                <Wire kind="pink" d="M1722 317 H1743" />
                <Wire kind="pink" d="M1775 304 H1788" />
                <Wire kind="pink" d="M1667 583 H1673 V596 H1679" />
                <Wire kind="pink" d="M1649 604 H1679" />
                <Wire kind="pink" d="M1711 600 H1718 V576 H1723" />
                <Wire kind="blue" d="M1761 958 H1844" />
                <Wire kind="blue" d="M1900 917 H1830 V1021" />
              </WireLayer>

              {[277, 289, 301, 313].map((y) => (
                <NodeBox key={y} $x={1691} $y={y} $w={31} $h={10}><IndexGlyph /></NodeBox>
              ))}
              <NodeBox $x={1743} $y={289} $w={32} $h={33}><BuildArrayGlyph w={30} h={31} rows={4} /></NodeBox>
              <DiagramLabel $x={1786} $y={286}>Sensor data</DiagramLabel>
              <NodeBox $x={1785} $y={303} $w={38} $h={38}><SensorIcon /></NodeBox>
              <NodeBox $x={1727} $y={418} $w={32} $h={41}><BuildArrayGlyph w={30} h={39} rows={5} /></NodeBox>
              <GreenBool $x={1798} $y={416} $w={15} $h={14}>T</GreenBool>
              <NodeBox $x={1864} $y={398} $w={32} $h={30}><WriteIcon /></NodeBox>
              <PinkConst $x={1633} $y={574} $w={34} $h={19}>*CLE</PinkConst>
              <PinkConst $x={1633} $y={596} $w={16} $h={16}><PinkIcon /></PinkConst>
              <NodeBox $x={1679} $y={592} $w={32} $h={17}><ConcatGlyph /></NodeBox>
              <NodeBox $x={1723} $y={565} $w={32} $h={32}><VisaWriteGlyph /></NodeBox>
              <NodeBox $x={1788} $y={570} $w={32} $h={32}><VisaCloseGlyph /></NodeBox>
              <NodeBox $x={1618} $y={621} $w={32} $h={32}><TimerGlyph /></NodeBox>
              <Tunnel $x={1590} $y={627} $w={8} $h={12} $c="#cfe8a0" />
              <Tunnel $x={1590} $y={654} $w={8} $h={8} $c="#007878" />
              <Tunnel $x={1633} $y={493} $w={8} $h={8} $c="#7a0f7a" />
              <Tunnel $x={1791} $y={954} $w={8} $h={8} $c="#0000e0" />
              <EnumConst $x={1604} $y={949} $w={157} $h={18}>
                <EnumArrows><TinyArrow $left /><TinyArrow /></EnumArrows>
                Disabled and Grayed Out
                <EnumDrop />
              </EnumConst>
              <DiagramLabel $x={1844} $y={926}>5 minutes</DiagramLabel>
              <StatusBox $x={1844} $y={941} $w={53} $h={27}>
                <StatusTop>!!<StatusBar />!!</StatusTop>
                <StatusValue><TinyArrow />Disabled</StatusValue>
              </StatusBox>
            </ScreenOrigin>
          </Canvas>
          <VBar>
            <Arrow $dir="up" />
            <Thumb $vertical $start={138} $len={572}><ThumbGrip $vertical /></Thumb>
            <Arrow $dir="down" />
          </VBar>
        </Body>
        <HScroll leftW={16} rightW={16} />
      </Client>
    </WindowFrame>
  );
}

function LeftDiagramWindow() {
  return (
    <WindowFrame $x={-4} $y={11} $w={190} $h={1023} $z={2}>
      <TitleBar $h={30} $pad={8}>
        <TitleIcon><LvLogo /></TitleIcon>
        <TitleText>thcd_400_control_1.vi Block Diagram *</TitleText>
      </TitleBar>
      <Client>
        <Header>
          <HeaderMain>
            <Menus pad={7} items={['File', 'Edit', 'View', 'Project', 'Operate']} />
            <Toolbar $h={25} $pad={53}>
              <RunControls />
            </Toolbar>
          </HeaderMain>
        </Header>
        <Body>
          <Canvas>
            <ScreenOrigin $x={4} $y={88}>
              <WireLayer width="300" height="1080">
                <Wire kind="blue" d="M78 300 H124" />
                <Wire kind="tealSolid" d="M156 292 H176" />
                <Wire kind="blue" d="M156 294 H176" />
                <Wire kind="yellow" d="M156 316 H163 V539 H176" />
                <Wire kind="teal" d="M158 562 H176" />
                <Wire kind="brown" d="M57 861 H126" />
                <Wire kind="brown" d="M158 865 H176" />
                <Wire kind="blue" d="M116 873 H122 V875 H126" />
              </WireLayer>
              <EnumConst $x={32} $y={291} $w={46} $h={19} $flag>
                <EnumArrows><TinyArrow $left /><TinyArrow /></EnumArrows>
                idle
                <EnumDrop />
              </EnumConst>
              <NodeBox $x={124} $y={288} $w={32} $h={32}><QueueGlyph /></NodeBox>
              <PathConst $x={4} $y={553} $w={154} $h={19}>ow_c\data\flow_monitor.csv</PathConst>
              <ArrayConst $x={38} $y={839} $w={19} $h={44}>
                <ArrayCell>0</ArrayCell>
                <ArrayCell>0</ArrayCell>
              </ArrayConst>
              <NumConst $x={103} $y={864} $w={13} $h={19}>0</NumConst>
              <NodeBox $x={126} $y={852} $w={32} $h={27}><ReshapeGlyph /></NodeBox>
            </ScreenOrigin>
          </Canvas>
        </Body>
        <HScroll leftW={16} rightW={16} />
      </Client>
    </WindowFrame>
  );
}

function OlderBackWindow() {
  return (
    <WindowFrame $x={-4} $y={3} $w={190} $h={40} $z={1}>
      <TitleBar $h={12} $pad={2}>
        <TitleIcon><LvLogo /></TitleIcon>
        <TitleText>ITM10 monitor.vi Block Diagram</TitleText>
      </TitleBar>
    </WindowFrame>
  );
}

function MiddleWindow() {
  return (
    <WindowFrame $x={1000} $y={12} $w={530} $h={1026} $z={3}>
      <TitleBar $h={29} $pad={0}>
        <Caption top={0} h={17} />
      </TitleBar>
      <Client>
        <Header>
          <HeaderMain>
            <Menus pad={8} items={[]} />
            <Toolbar $h={25} $pad={0}>
              <ToolSpacer />
              <SearchGroup>
                Search
                <MagnifierIcon />
              </SearchGroup>
              <HelpIcon />
            </Toolbar>
          </HeaderMain>
          <IconPanel><ViIcon /></IconPanel>
        </Header>
        <Body>
          <Canvas>
            <ScreenOrigin $x={1008} $y={88}>
              <WireLayer width="1530" height="1080">
                <Wire kind="brown" d="M1300 902 H1432" />
                <Wire kind="gray" d="M1440 910 V980" />
                <Wire kind="gray" d="M1300 980 H1443" />
              </WireLayer>
              <CaseFrame $x={1300} $y={860} $w={60} $h={64} />
              <Tunnel $x={1352} $y={898} $w={8} $h={8} $c="#7a2d10" />
              <Tunnel $x={1426} $y={896} $w={12} $h={12} $c="#e9c090" />
            </ScreenOrigin>
          </Canvas>
          <VBar>
            <Arrow $dir="up" />
            <Arrow $dir="down" />
          </VBar>
        </Body>
        <HScroll leftW={16} rightW={16} />
      </Client>
    </WindowFrame>
  );
}

function FrontPanelWindow() {
  return (
    <WindowFrame $x={174} $y={0} $w={1167} $h={1038} $z={4}>
      <TitleBar $h={31} $pad={9}>
        <TitleIcon><LvLogo /></TitleIcon>
        <TitleText>thcd_400_control_1.vi Front Panel *</TitleText>
        <Caption top={-9} h={20} />
      </TitleBar>
      <Client>
        <Header>
          <HeaderMain>
            <Menus pad={8} />
            <Toolbar $h={25} $pad={53}>
              <RunControls />
              <FontBox>
                15pt Application Font
                <Arrow $dir="down" />
              </FontBox>
              <AlignGroup>
                <AlignIcon tone={0} />
                <AlignIcon tone={1} />
                <AlignIcon tone={2} />
                <AlignIcon tone={3} />
              </AlignGroup>
              <ToolSpacer />
              <Arrow $dir="right" />
              <SearchGroup $left={5}>
                Search
                <MagnifierIcon />
              </SearchGroup>
              <HelpIcon />
            </Toolbar>
          </HeaderMain>
          <IconPanel><GridIcon /><ViIcon /></IconPanel>
        </Header>
        <Body>
          <Canvas $grid>
            <ScreenOrigin $x={182} $y={78}>
              <Label $x={329} $right $y={148}>thcd_visa</Label>
              <Label $x={318} $right $y={172}>Baud_rate</Label>
              <Spinner $x={321} $y={159} $w={13} $h={25} />
              <BackResource y={219} id="1" />
              <BackResource y={293} id="2" />
              <BackResource y={367} id="3" />
              <BackResource y={441} id="4" />
              <Label $x={276} $y={542}>Sensor data</Label>
              <SensorPanel $x={280} $y={553} $w={100} $h={260} />
              {[['30', 555], ['25', 587], ['20', 620], ['15', 652], ['10', 685], ['5', 718], ['1', 742], ['1', 758], ['05', 773]].map(([t, y], i) => (
                <AxisNum key={i} $x={325} $y={y as number}>{t}</AxisNum>
              ))}
              <RotatedLabel $x={296} $y={650}>Data</RotatedLabel>
              <GraphPalette $x={184} $y={785} $w={84} $h={27}>
                <PaletteBtn>
                  <svg width="14" height="14" viewBox="0 0 14 14"><path d="M7 0V14M0 7H14" stroke="#222" /><rect x="1" y="1" width="3" height="3" fill="#3a6a3a" /></svg>
                </PaletteBtn>
                <PaletteBtn $on>
                  <svg width="14" height="14" viewBox="0 0 14 14"><circle cx="8" cy="5" r="4" fill="#ddd" stroke="#111" /><path d="M8 3V7M6 5H10M5 8L1 13" stroke="#111" strokeWidth="1.2" /></svg>
                </PaletteBtn>
                <PaletteBtn>
                  <svg width="14" height="14" viewBox="0 0 14 14"><path d="M4 13 L1 7 L3 6 L4 8 V2 H5.5 V6 V1 H7 V6 V2 H8.5 V6 V3 H10 V9 L9 13 Z" fill="#fff" stroke="#222" strokeWidth=".8" /></svg>
                </PaletteBtn>
              </GraphPalette>
            </ScreenOrigin>
          </Canvas>
          <VBar>
            <Arrow $dir="up" />
            <Thumb $vertical $start={385} $len={500} />
            <Arrow $dir="down" />
          </VBar>
        </Body>
        <HScroll leftW={16} rightW={16} thumb={[179, 702]} />
      </Client>
    </WindowFrame>
  );
}

function ControlWindow() {
  const ch1Trace = tracePoints(511, 67);
  const ch2Trace = tracePoints(511, 96);
  const ch2Spikes = SPIKES.map((zx) => (zx - 241) / 2.376);
  const ch3Trace = CH3_POINTS.map(([zx, v]) => `${((zx - 277) / 2.376).toFixed(1)},${v ? 1 : 66}`).join(' ');
  return (
    <WindowFrame $x={337} $y={82} $w={1245} $h={812} $z={6} $focus>
      <TitleBar $h={30} $pad={7} $tone="focus">
        <TitleIcon><LvLogo /></TitleIcon>
        <TitleText>thcd_400_control.vi</TitleText>
        <Caption top={-7} h={18} red />
      </TitleBar>
      <Client>
        <Header>
          <HeaderMain>
            <Menus pad={7} />
            <Toolbar $h={25} $pad={52}>
              <RunControls active />
              <ToolSpacer />
              <HelpIcon />
            </Toolbar>
          </HeaderMain>
          <IconPanel><ViIcon /></IconPanel>
        </Header>
        <Body>
          <Canvas $panel>
            <ScreenOrigin $x={345} $y={159}>
              <LvButton $x={502} $y={194} $w={79} $h={20}>Init Devices</LvButton>
              <LvButton $x={593} $y={194} $w={79} $h={20}>GetStatus</LvButton>
              <LvButton $x={845} $y={194} $w={79} $h={20}>Monitor</LvButton>
              <LvButton $x={1112} $y={194} $w={79} $h={20}>SetFlow</LvButton>
              <LvButton $x={1356} $y={195} $w={76} $h={20} $exit>EXIT</LvButton>

              <Label $x={500} $right $y={243}>thcd_visa</Label>
              <VisaTile $x={503} $y={231} $w={78} $h={24}>
                <VisaSymbol />
                <VisaValue>COM3</VisaValue>
                <DropButton><Arrow $dir="down" /></DropButton>
              </VisaTile>
              <Label $x={489} $right $y={267}>Baud_rate</Label>
              <Spinner $x={491} $y={254} $w={13} $h={25} />
              <RingTile $x={503} $y={255} $w={78} $h={24}>19.2KHz</RingTile>

              <Resource y={314} id="1" value="CLOSE" />
              <Resource y={388} id="2" value="CLOSE" />
              <Resource y={462} id="3" value="CLOSE" />
              <Resource y={536} id="4" value="CLOSE" />

              <Label $x={852} $y={233}>milliseconds to wait</Label>
              <Spinner $x={840} $y={241} $w={13} $h={25} />
              <FieldTile $x={852} $y={242} $w={53} $h={24} $white>0</FieldTile>
              <FieldTile $x={852} $y={267} $w={53} $h={24}>8.93</FieldTile>
              <FieldTile $x={852} $y={291} $w={53} $h={25}>9.11</FieldTile>
              <FieldTile $x={852} $y={316} $w={53} $h={24}>0</FieldTile>
              <Label $x={907} $y={274}>res_val</Label>
              <Label $x={907} $y={299}>res_val 2</Label>
              <Label $x={907} $y={324}>res_val 3</Label>

              <Label $x={1098} $right $y={239}>thcd_val</Label>
              <ThcdValBox $x={1101} $y={230} $w={108} $h={33}>
                <ThcdSpin>
                  <ThcdSpinKey><Arrow $dir="up" /></ThcdSpinKey>
                  <ThcdSpinKey><Arrow $dir="down" /></ThcdSpinKey>
                </ThcdSpin>
                <ThcdValue>0</ThcdValue>
              </ThcdValBox>
              <FieldTile $x={1103} $y={278} $w={99} $h={25} />
              <Label $x={1205} $y={287}>thcd_res_msg</Label>
              <FreeLed $x={1105} $y={309} $size={16} $color="radial-gradient(circle at 45% 40%,#3f6a2e,#16300e)" />
              <Label $x={1126} $y={316}>thcd_st</Label>

              <Label $x={829} $y={371}>ch1</Label>
              <Chart
                $x={852}
                $y={362}
                $w={605}
                $h={119}
                plot={{ x: 70, y: 10, w: 511, h: 67 }}
                yTicks={Y_TICKS}
                xTicks={X_TICKS}
                extraTicks={[502]}
                timeX={326}
              >
                <polyline points={ch1Trace} fill="none" stroke="#fff" strokeWidth="1" />
              </Chart>

              <Label $x={829} $y={491}>ch2</Label>
              <Chart
                $x={852}
                $y={482}
                $w={605}
                $h={148}
                plot={{ x: 70, y: 10, w: 511, h: 96 }}
                yTicks={Y_TICKS}
                xTicks={X_TICKS}
                extraTicks={[502]}
                timeX={326}
              >
                <polyline points={ch2Trace} fill="none" stroke="#fff" strokeWidth="1" />
                {ch2Spikes.map((sx) => (
                  <path key={sx} d={`M${sx.toFixed(1)} 0 V58`} stroke="#fff" strokeWidth="1.4" />
                ))}
              </Chart>

              <Label $x={829} $y={647}>ch3</Label>
              <Chart
                $x={852}
                $y={638}
                $w={341}
                $h={119}
                plot={{ x: 85, y: 10, w: 232, h: 67 }}
                yTicks={[['0.01', 1], ['0.005', 0.5], ['0', 0]]}
                xTicks={[['3743.97', -1], ['3750', 34], ['3760', 90], ['3770', 147], ['3784.97', 230]]}
                extraTicks={[203]}
                timeX={200}
              >
                <polyline points={ch3Trace} fill="none" stroke="#fff" strokeWidth="1.2" />
              </Chart>
            </ScreenOrigin>
          </Canvas>
          <VBar>
            <Arrow $dir="up" />
            <Arrow $dir="down" />
          </VBar>
        </Body>
        <HScroll leftW={16} rightW={16} />
      </Client>
    </WindowFrame>
  );
}

const ThcdValBox = styled.div<Box>`
  ${box};
  display: flex;
  align-items: center;
  padding: 0 10px 0 3px;
  gap: 3px;
  background: #c9c9c9;
  border: 1px solid #777;
`;
const ThcdSpin = styled.div`
  flex: none;
  width: 15px;
  display: flex;
  flex-direction: column;
  gap: 1px;
`;
const ThcdSpinKey = styled.span`
  height: 9px;
  display: flex;
  align-items: center;
  justify-content: center;
  background: #e6e6e6;
  border: 1px solid #999;
  box-sizing: border-box;
`;
const ThcdValue = styled.div`
  flex: 1;
  height: 17px;
  display: flex;
  align-items: center;
  padding-left: 2px;
  background: #fcfcfc;
`;

function ContextHelp() {
  return (
    <HelpFrame $x={1738} $y={31} $w={172} $h={170} $z={5}>
      <HelpTitle>
        Context Help
        <HelpClose>
          <svg width="9" height="9" viewBox="0 0 9 9">
            <path d="M1 1 L8 8 M8 1 L1 8" stroke="#fff" strokeWidth="2" />
          </svg>
        </HelpClose>
      </HelpTitle>
      <HelpClient>
        <HelpBody>
          <HelpText>
            ch2
            <HelpPara>No description<br />available.</HelpPara>
          </HelpText>
          <HelpScroll>
            <Arrow $dir="up" />
            <Arrow $dir="down" />
          </HelpScroll>
        </HelpBody>
        <HelpFooter>
          <HelpTool>
            <svg width="12" height="12" viewBox="0 0 12 12"><path d="M0 6H12M6 0V12" stroke="#1a1ad0" /><rect x="3" y="3" width="6" height="6" fill="#fff" stroke="#111" /></svg>
          </HelpTool>
          <HelpTool>
            <svg width="12" height="12" viewBox="0 0 12 12"><path d="M3 6V4a3 3 0 0 1 6 0" fill="none" stroke="#111" strokeWidth="1.2" /><rect x="2" y="6" width="8" height="5.5" fill="#eee" stroke="#111" /></svg>
          </HelpTool>
          <HelpTool>?</HelpTool>
          <HelpHScroll>
            <Arrow $dir="left" />
            <Arrow $dir="right" />
          </HelpHScroll>
        </HelpFooter>
      </HelpClient>
    </HelpFrame>
  );
}

export default function App() {
  return (
    <Desktop>
      <GlobalStyle />
      <OlderBackWindow />
      <BigDiagramWindow />
      <LeftDiagramWindow />
      <MiddleWindow />
      <FrontPanelWindow />
      <ContextHelp />
      <ControlWindow />
      <Taskbar>
        <StartOrb><StartIcon /></StartOrb>
        <TaskButton $w={58} $active={false}><FolderIcon /></TaskButton>
        <TaskButton $w={58}><FirefoxIcon /></TaskButton>
        <TaskButton $w={58}><ChromeIcon /></TaskButton>
        <TaskButton $w={50} $active><LabviewTaskIcon /></TaskButton>
        <Tray>
          <TrayIcon $mr={14}>
            <svg width="8" height="5" viewBox="0 0 8 5"><path d="M0 5 L4 0 L8 5 Z" fill="#fff" /></svg>
          </TrayIcon>
          <TrayIcon $mr={12}>
            <svg width="15" height="16" viewBox="0 0 15 16">
              <path d="M1 5 H4 L8 1 V15 L4 11 H1 Z" fill="#ddd" />
              <path d="M10 5 Q12 8 10 11 M12 3 Q15 8 12 13" stroke="#ddd" fill="none" />
            </svg>
          </TrayIcon>
          <TrayIcon $mr={9}>
            <svg width="15" height="17" viewBox="0 0 15 17">
              <path d="M2 1 V16 M2 1 H9 V8 H2" stroke="#fff" fill="#fff" />
              <circle cx="10" cy="12" r="4.6" fill="#d81f1f" />
              <path d="M8 10 L12 14 M12 10 L8 14" stroke="#fff" strokeWidth="1.2" />
            </svg>
          </TrayIcon>
          <TrayIcon $mr={5}>
            <svg width="16" height="16" viewBox="0 0 16 16">
              <circle cx="8" cy="8" r="4" fill="#f0a020" />
              <path d="M8 0V16M0 8H16M2 2L14 14M14 2L2 14" stroke="#e89020" />
            </svg>
          </TrayIcon>
          <Clock>9:47 AM<br />11/17/2018</Clock>
        </Tray>
        <ShowDesktop />
      </Taskbar>
    </Desktop>
  );
}
